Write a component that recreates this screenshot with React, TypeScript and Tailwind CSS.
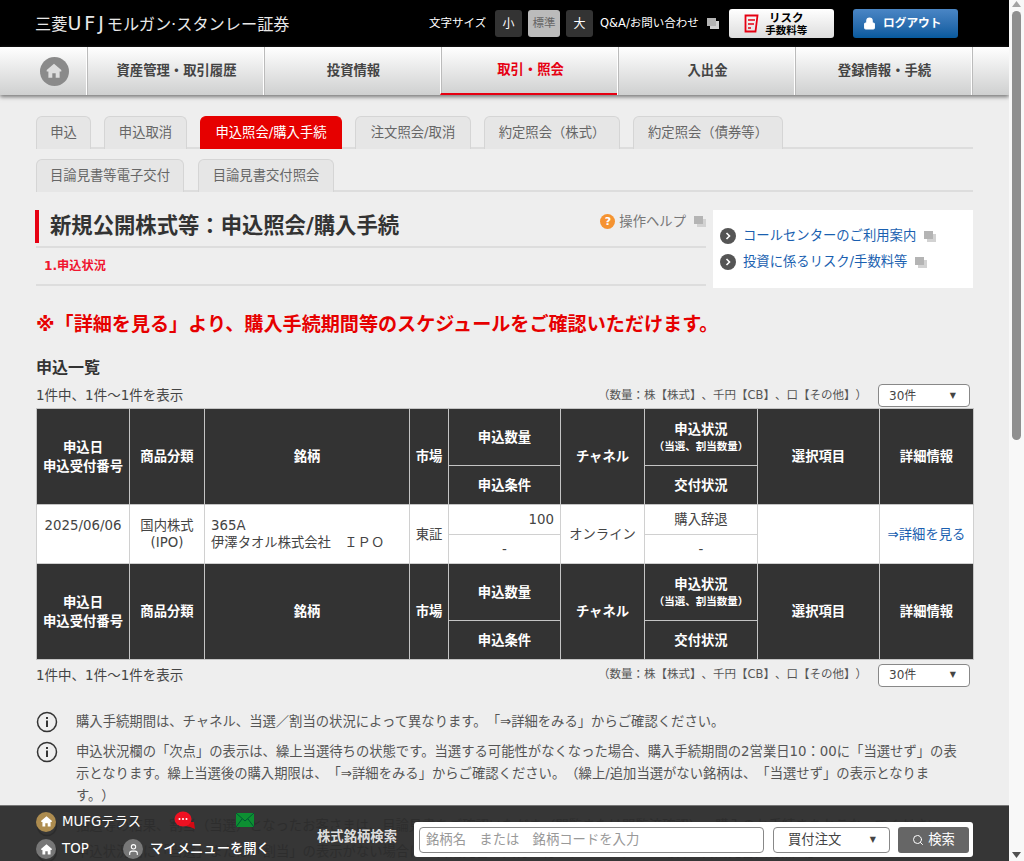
import { Lock, Search, User } from "lucide-react"

const font = { fontFamily: "'DejaVu Sans','Noto Sans CJK JP',sans-serif" }

// overlapped squares used beside external links
function WindowIcon({ className = "" }: { className?: string }) {
  return (
    <svg width="12" height="11" viewBox="0 0 12 11" className={className}>
      <rect x="3" y="3" width="9" height="8" fill="#d2d2d2" />
      <rect x="0" y="0" width="9" height="8" fill="#b4b4b4" />
    </svg>
  )
}

function HomeIcon({ size = 15, fill = "#fff" }: { size?: number; fill?: string }) {
  return (
    <svg width={size} height={size} viewBox="0 0 16 16">
      <path d="M8 1.5 1.5 7v1.5H3V14h3.5v-4h3v4H13V8.5h1.5V7z" fill={fill} />
    </svg>
  )
}

function Arrow() {
  return (
    <span className="w-[16px] h-[16px] rounded-full bg-[#555] flex items-center justify-center shrink-0">
      <svg width="8" height="8" viewBox="0 0 8 8">
        <path d="M2.5 1 5.5 4 2.5 7" fill="none" stroke="#fff" strokeWidth="1.6" />
      </svg>
    </span>
  )
}

function InfoIcon() {
  return (
    <svg width="22" height="22" viewBox="0 0 22 22" className="shrink-0">
      <circle cx="11" cy="11" r="9.5" fill="none" stroke="#333" strokeWidth="1.5" />
      <rect x="10" y="9.5" width="2" height="6.5" fill="#333" />
      <rect x="10" y="6" width="2" height="2" fill="#333" />
    </svg>
  )
}

function Tab({ label, active, w }: { label: string; active?: boolean; w: string }) {
  return (
    <div
      className={`${w} h-[33px] -mb-[2px] flex items-center justify-center rounded-t-[6px] border border-b-0 text-[13.33px] ${
        active ? "bg-[#e60000] border-[#e60000] text-white" : "bg-[#e6e6e6] border-[#d5d5d5] text-[#666]"
      }`}
    >
      {label}
    </div>
  )
}

function NavItem({ label, active }: { label: string; active?: boolean }) {
  return (
    <div
      className={`w-[177px] h-full flex items-center justify-center pl-[3px] border-l border-l-white text-[13.33px] font-bold shadow-[inset_1px_0_0_#bbb] ${
        active ? "text-[#e60012] border-b-2 border-b-[#e60012]" : "text-[#444]"
      }`}
    >
      {label}
    </div>
  )
}

function HeadRows() {
  const th = "bg-[#333] text-white font-bold text-[13.33px] border border-[#c4c4c4] text-center leading-[19px]"
  return (
    <>
      <tr className="h-[57px]">
        <th rowSpan={2} className={th}>
          申込日
          <br />
          申込受付番号
        </th>
        <th rowSpan={2} className={th}>商品分類</th>
        <th rowSpan={2} className={th}>銘柄</th>
        <th rowSpan={2} className={th}>市場</th>
        <th className={th}>申込数量</th>
        <th rowSpan={2} className={th}>チャネル</th>
        <th className={th}>
          申込状況
          <br />
          <span className="text-[10.5px] block leading-[15px]">（当選、割当数量）</span>
        </th>
        <th rowSpan={2} className={th}>選択項目</th>
        <th rowSpan={2} className={th}>詳細情報</th>
      </tr>
      <tr className="h-[39px]">
        <th className={th}>申込条件</th>
        <th className={th}>交付状況</th>
      </tr>
    </>
  )
}

function CountRow() {
  return (
    <div className="flex items-center justify-between w-[937px] text-[#444]">
      <span className="text-[13.5px]">1件中、1件～1件を表示</span>
      <div className="flex items-center">
        <span className="text-[11.5px] text-[#555] mr-[11px]">（数量：株【株式】、千円【CB】、口【その他】）</span>
        <div className="w-[92px] h-[23px] mr-[3px] bg-white border border-[#888] rounded-[4px] flex items-center justify-between pl-[10px] pr-[13px] text-[12px] text-[#444]">
          30件
          <span className="text-[8px]">▼</span>
        </div>
      </div>
    </div>
  )
}

export default function App() {
  const td = "border border-[#d0d0d0] bg-white text-[13.33px] leading-[17px]"
  return (
    <div className="relative flex w-[1024px] h-[861px] overflow-hidden bg-[#eee] [text-spacing-trim:space-all]" style={font}>
      <div className="w-[1009px] shrink-0">
        {/* header */}
        <div className="h-[47px] bg-black flex items-center text-white">
          <div className="ml-[35px] w-[394px] text-[16.2px] text-[#e8e8e8] whitespace-nowrap">
            三菱<span className="text-[19px] tracking-[3px]">UFJ</span>モルガン·スタンレー証券
          </div>
          <span className="text-[11.5px] w-[66px]">文字サイズ</span>
          <div className="w-[27px] h-[27px] rounded-[3px] bg-[#333] flex items-center justify-center text-[12px]">小</div>
          <div className="ml-[6px] w-[32px] h-[27px] rounded-[3px] bg-[#bbb] text-[#666] flex items-center justify-center text-[11.5px]">標準</div>
          <div className="ml-[6px] w-[27px] h-[27px] rounded-[3px] bg-[#333] flex items-center justify-center text-[12px]">大</div>
          <span className="ml-[7px] text-[11.5px] whitespace-nowrap">Q&amp;A/お問い合わせ</span>
          <WindowIcon className="ml-[8px] shrink-0" />
          <div className="ml-[10px] w-[105px] h-[29px] rounded-[3px] bg-gradient-to-b from-white to-[#ddd] flex items-center justify-center pr-[11px] text-black text-[10.5px] font-bold leading-[12px]">
            <svg width="16" height="20" viewBox="0 0 16 20" className="mr-[5px]">
              <path d="M1.5 1.5h12l-2 16h-10z" fill="none" stroke="#e60012" strokeWidth="1.8" />
              <path d="M4 6h7M4 10h6M4 14h3" stroke="#e60012" strokeWidth="1.6" />
            </svg>
            <div className="text-center">
              <span className="text-[11.5px]">リスク</span>
              <br />
              手数料等
            </div>
          </div>
          <div className="ml-[19px] w-[105px] h-[29px] rounded-[3px] bg-gradient-to-b from-[#4a86c5] to-[#065a9e] flex items-center justify-center pr-[6px] text-[11.7px] font-bold">
            <Lock size={13} fill="#fff" className="mr-[7px]" />
            ログアウト
          </div>
        </div>

        {/* global nav */}
        <div className="h-[48px] flex bg-gradient-to-b from-white to-[#cfd0d0] shadow-[0_2px_4px_#777]">
          <div className="w-[86px] flex items-center justify-center pl-[26px] pr-[4px]">
            <div className="w-[29px] h-[29px] rounded-full bg-[#8a8a8a] shrink-0 flex items-center justify-center">
              <HomeIcon size={18} fill="#ddd" />
            </div>
          </div>
          <NavItem label="資産管理・取引履歴" />
          <NavItem label="投資情報" />
          <NavItem label="取引・照会" active />
          <NavItem label="入出金" />
          <NavItem label="登録情報・手続" />
          <div className="flex-1 border-l border-l-white shadow-[inset_1px_0_0_#bbb]" />
        </div>

        <div className="pl-[36px] pr-[36px]">
          {/* tabs */}
          <div className="mt-[21px] flex gap-[13px] border-b-2 border-[#ddd] w-[937px]">
            <Tab label="申込" w="w-[55px]" />
            <Tab label="申込取消" w="w-[83px]" />
            <Tab label="申込照会/購入手続" w="w-[142px]" active />
            <Tab label="注文照会/取消" w="w-[116px]" />
            <Tab label="約定照会（株式）" w="w-[136px]" />
            <Tab label="約定照会（債券等）" w="w-[150px]" />
          </div>
          <div className="mt-[10px] flex gap-[14px] border-b-2 border-[#ddd] w-[937px]">
            <Tab label="目論見書等電子交付" w="w-[148px]" />
            <Tab label="目論見書交付照会" w="w-[136px]" />
          </div>

          {/* title + side links */}
          <div className="mt-[18px] flex w-[937px]">
            <div className="w-[670px]">
              <div className="h-[38px] pb-[5px] border-b-2 border-[#ddd] flex items-start">
                <div className="h-[33px] flex items-center justify-between flex-1 border-l-4 border-[#e60012] pl-[11px] -ml-[1px]">
                  <h1 className="text-[21.33px] font-bold text-[#333] whitespace-nowrap pb-[2px]">新規公開株式等：申込照会/購入手続</h1>
                  <div className="flex items-center text-[13.33px] text-[#777] -mt-[9px]">
                    <span className="w-[15px] h-[15px] rounded-full bg-[#f59331] text-white text-[11px] font-bold flex items-center justify-center mr-[4px]">?</span>
                    操作ヘルプ
                    <WindowIcon className="ml-[8px]" />
                  </div>
                </div>
              </div>
              <div className="h-[38px] border-b-2 border-[#ddd] flex items-center pl-[8px] text-[12.2px] font-bold text-[#f0152f]">
                1.申込状況
              </div>
            </div>
            <div className="ml-[7px] w-[260px] h-[78px] bg-white pl-[7px] pt-[13px] text-[13.33px] text-[#1a5fb0]">
              <div className="flex items-center h-[26px]">
                <Arrow />
                <span className="ml-[7px]">コールセンターのご利用案内</span>
                <WindowIcon className="ml-[8px]" />
              </div>
              <div className="flex items-center h-[26px]">
                <Arrow />
                <span className="ml-[7px]">投資に係るリスク/手数料等</span>
                <WindowIcon className="ml-[8px]" />
              </div>
            </div>
          </div>

          {/* warning */}
          <p className="mt-[23px] text-[19.1px] font-bold text-[#e60000] leading-[28px] whitespace-nowrap">
            ※「詳細を見る」より、購入手続期間等のスケジュールをご確認いただけます。
          </p>

          <h2 className="mt-[17px] text-[16px] font-bold text-[#333] leading-[24px]">申込一覧</h2>

          <div className="mt-[3px] h-[25px] flex items-center">
            <CountRow />
          </div>

          {/* table */}
          <table className="w-[937px] table-fixed border-collapse">
            <colgroup>
              <col className="w-[93px]" />
              <col className="w-[75px]" />
              <col className="w-[205px]" />
              <col className="w-[39px]" />
              <col className="w-[112px]" />
              <col className="w-[84px]" />
              <col className="w-[113px]" />
              <col className="w-[122px]" />
              <col className="w-[94px]" />
            </colgroup>
            <tbody className="text-[#444]">
              <HeadRows />
              <tr className="h-[30px]">
                <td rowSpan={2} className={`${td} text-center align-top pt-[12px]`}>2025/06/06</td>
                <td rowSpan={2} className={`${td} text-center`}>
                  国内株式
                  <br />
                  (IPO)
                </td>
                <td rowSpan={2} className={`${td} pl-[6px]`}>
                  365A
                  <br />
                  伊澤タオル株式会社　ＩＰＯ
                </td>
                <td rowSpan={2} className={`${td} text-center`}>東証</td>
                <td className={`${td} text-right pr-[6px]`}>100</td>
                <td rowSpan={2} className={`${td} text-center`}>オンライン</td>
                <td className={`${td} text-center`}>購入辞退</td>
                <td rowSpan={2} className={td} />
                <td rowSpan={2} className={`${td} text-center text-[#1a5fb0]`}>⇒詳細を見る</td>
              </tr>
              <tr className="h-[29px]">
                <td className={`${td} text-center`}>-</td>
                <td className={`${td} text-center`}>-</td>
              </tr>
              <HeadRows />
            </tbody>
          </table>

          <div className="mt-[2px] h-[26px] flex items-center">
            <CountRow />
          </div>

          {/* notes */}
          <div className="mt-[23px] w-[937px] text-[13.33px] text-[#555] leading-[22px]">
            <div className="flex gap-[18px]">
              <InfoIcon />
              <p>購入手続期間は、チャネル、当選／割当の状況によって異なります。「⇒詳細をみる」からご確認ください。</p>
            </div>
            <div className="mt-[8px] flex gap-[18px] pr-[15px]">
              <InfoIcon />
              <p>
                申込状況欄の「次点」の表示は、繰上当選待ちの状態です。当選する可能性がなくなった場合、購入手続期間の2営業日10：00に「当選せず」の表示となります。繰上当選後の購入期限は、「⇒詳細をみる」からご確認ください。（繰上/追加当選がない銘柄は、「当選せず」の表示となります。）
              </p>
            </div>
            <div className="mt-[8px] flex gap-[18px]">
              <InfoIcon />
              <p className="whitespace-nowrap">抽選等の結果、割当（当選）となったお客さまは、目論見書をご確認いただき（閲覧または閲覧済確認）、購入のお手続きをおこなってください。</p>
            </div>
            <div className="mt-[4px] flex gap-[18px]">
              <InfoIcon />
              <p className="whitespace-nowrap">申込状況欄に「当選」または「割当」の表示がない場合には目論見書の交付は行われません。その場合「目論見書交付照会」</p>
            </div>
          </div>
        </div>
      </div>

      {/* scrollbar */}
      <div className="w-[15px] h-full bg-[#f8f8f8] flex flex-col items-center relative">
        <svg width="9" height="6" viewBox="0 0 9 6" className="mt-[1px]">
          <path d="M4.5 0 9 6H0z" fill="#a3a3a3" />
        </svg>
        <div className="mt-[4px] w-[9px] h-[429px] rounded-full bg-[#8f8f8f]" />
        <svg width="9" height="6" viewBox="0 0 9 6" className="mt-auto mb-[3px]">
          <path d="M0 0h9L4.5 6z" fill="#505050" />
        </svg>
      </div>

      {/* fixed bottom bar */}
      <div className="absolute left-0 bottom-0 w-[1009px] h-[56px] bg-[#2b2b2b]/95 border-t border-[#777] flex text-white">
        <div className="w-[290px] pl-[36px] pt-[2px] text-[13.33px]">
          <div className="h-[27px] flex items-center">
            <span className="w-[20px] h-[20px] rounded-full bg-[#ad8c4f] flex items-center justify-center">
              <HomeIcon size={13} />
            </span>
            <span className="ml-[6px] w-[112px]">MUFGテラス</span>
            <svg width="22" height="20" viewBox="0 0 22 20" className="mt-[-2px]">
              <path d="M12 11h8l1 7-5-2-4-1z" fill="#d40a14" />
              <ellipse cx="9" cy="8" rx="8.5" ry="7.5" fill="#ee1122" />
              <circle cx="5.5" cy="8" r="1" fill="#fff" />
              <circle cx="9" cy="8" r="1" fill="#fff" />
              <circle cx="12.5" cy="8" r="1" fill="#fff" />
            </svg>
            <svg width="18" height="14" viewBox="0 0 18 14" className="ml-[40px] mt-[-4px]">
              <rect width="18" height="14" fill="#0d8f32" />
              <path d="M0 0 9 8 18 0M0 14l6-8M18 14l-6-8" fill="none" stroke="#053" strokeWidth="1" />
            </svg>
          </div>
          <div className="h-[28px] flex items-center">
            <span className="w-[20px] h-[20px] rounded-full bg-[#777] flex items-center justify-center">
              <HomeIcon size={13} />
            </span>
            <span className="ml-[6px] w-[61px]">TOP</span>
            <span className="w-[20px] h-[20px] rounded-full bg-[#777] flex items-center justify-center">
              <User size={13} />
            </span>
            <span className="ml-[7px] whitespace-nowrap font-medium">マイメニューを開く</span>
          </div>
        </div>
        <div className="w-[124px] pl-[27px] pt-[21px] text-[13.33px] font-bold text-[#ddd] whitespace-nowrap">株式銘柄検索</div>
        <div className="mt-[16px] h-[35px] w-[559px] bg-white rounded-[3px] flex items-center pl-[5px] pr-[4px]">
          <div className="w-[345px] h-[26px] border border-[#888] rounded-[4px] flex items-center pl-[6px] text-[13.33px] text-[#999]">
            銘柄名　または　銘柄コードを入力
          </div>
          <div className="ml-[9px] w-[117px] h-[26px] border border-[#888] rounded-[4px] flex items-center justify-between pl-[14px] pr-[13px] text-[13.33px] text-[#444]">
            買付注文
            <span className="text-[8px]">▼</span>
          </div>
          <div className="ml-[8px] flex-1 h-[26px] rounded-[3px] bg-[#666] flex items-center justify-center text-white text-[13.33px]">
            <Search size={12} className="mr-[4px]" />
            検索
          </div>
        </div>
      </div>
    </div>
  )
}
